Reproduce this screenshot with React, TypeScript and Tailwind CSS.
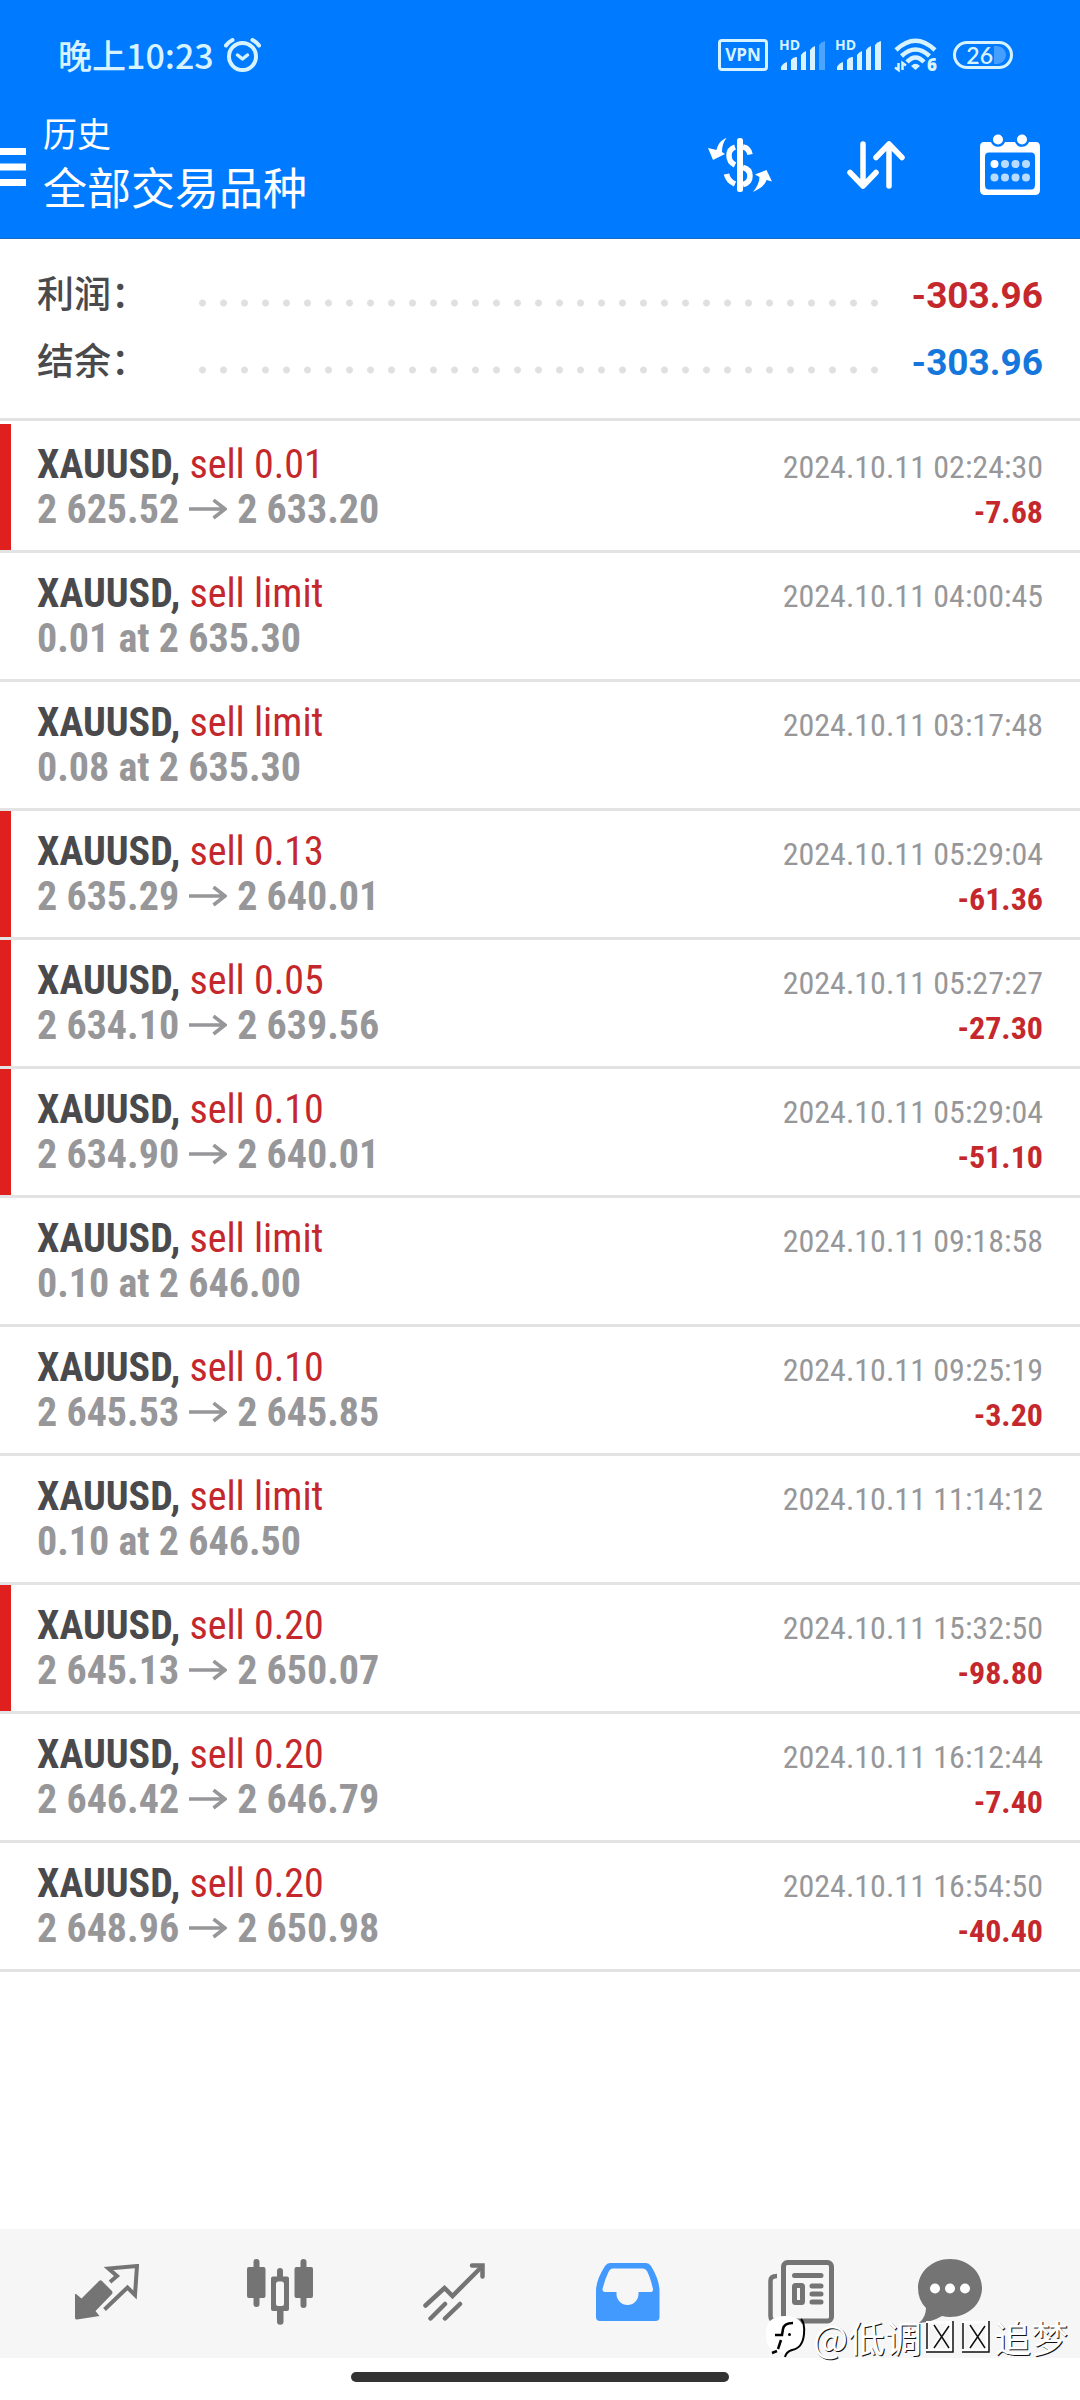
// src/App.tsx
import React from 'react';

type Deal = {
  type: string;
  detail: string;
  closePrice?: string;
  time: string;
  profit?: string;
  marked?: boolean;
};

const deals: Deal[] = [
  { type: 'sell 0.01', detail: '2 625.52', closePrice: '2 633.20', time: '2024.10.11 02:24:30', profit: '-7.68', marked: true },
  { type: 'sell limit', detail: '0.01 at 2 635.30', time: '2024.10.11 04:00:45' },
  { type: 'sell limit', detail: '0.08 at 2 635.30', time: '2024.10.11 03:17:48' },
  { type: 'sell 0.13', detail: '2 635.29', closePrice: '2 640.01', time: '2024.10.11 05:29:04', profit: '-61.36', marked: true },
  { type: 'sell 0.05', detail: '2 634.10', closePrice: '2 639.56', time: '2024.10.11 05:27:27', profit: '-27.30', marked: true },
  { type: 'sell 0.10', detail: '2 634.90', closePrice: '2 640.01', time: '2024.10.11 05:29:04', profit: '-51.10', marked: true },
  { type: 'sell limit', detail: '0.10 at 2 646.00', time: '2024.10.11 09:18:58' },
  { type: 'sell 0.10', detail: '2 645.53', closePrice: '2 645.85', time: '2024.10.11 09:25:19', profit: '-3.20' },
  { type: 'sell limit', detail: '0.10 at 2 646.50', time: '2024.10.11 11:14:12' },
  { type: 'sell 0.20', detail: '2 645.13', closePrice: '2 650.07', time: '2024.10.11 15:32:50', profit: '-98.80', marked: true },
  { type: 'sell 0.20', detail: '2 646.42', closePrice: '2 646.79', time: '2024.10.11 16:12:44', profit: '-7.40' },
  { type: 'sell 0.20', detail: '2 648.96', closePrice: '2 650.98', time: '2024.10.11 16:54:50', profit: '-40.40' },
];

/* ==================== Status bar icons ==================== */
const AlarmIcon = () => (
  <svg width="37" height="35" viewBox="0 0 37 35" fill="none" stroke="currentColor" strokeWidth="4" strokeLinecap="round" strokeLinejoin="round">
    <circle cx="18.5" cy="18.5" r="13.5" />
    <path d="M13.5 17L18.5 21L23.5 17" strokeWidth="3.5" />
    <path d="M2 7.5Q4.5 4 8.5 2M35 7.5Q32.5 4 28.5 2" />
  </svg>
);

const SignalIcon = ({ weak }: { weak?: boolean }) => (
  <svg width="47" height="42" viewBox="0 -5 47 42" fill="currentColor">
    <text x="0" y="11" fontSize="14" fontWeight="700" fontFamily="Open Sans, sans-serif">HD</text>
    <path d="M2 31V28Q4 24 8 23V31ZM12 31V21Q14 18 18 18V31ZM22 31V16Q24 13 27 12V31ZM31 31V11Q33 8 36 7V31Z" />
    <path d="M40 31V6Q42 3 46 2V31Z" opacity={weak ? 0.35 : 1} />
  </svg>
);

const WifiIcon = () => (
  <svg width="48" height="46" viewBox="0 -6 48 46" fill="none" stroke="currentColor" strokeWidth="4.5">
    <path d="M2 12Q21.500 -6.500 41 12" />
    <path d="M7.500 18Q21.500 5 35.500 18" />
    <path d="M13 24Q21.500 15 30 24" />
    <path d="M21.500 32L17 28Q21.500 23.500 26 28Z" fill="currentColor" stroke="none" />
    <path d="M4.500 25V32L1 29.500M8.500 32V25L12 27.500" strokeWidth="2.500" />
    <text x="33" y="33" fontSize="17" fontWeight="800" fill="currentColor" stroke="none" fontFamily="Open Sans, sans-serif">6</text>
  </svg>
);

/* ==================== Toolbar icons ==================== */
const MenuIcon = () => (
  <svg width="26" height="38" viewBox="0 0 26 38" fill="currentColor">
    <path d="M0 0H26V7H0ZM0 15.500H26V22.500H0ZM0 31H26V38H0Z" />
  </svg>
);

const CurrencyIcon = () => (
  <svg width="64" height="54" viewBox="0 0 64 54" fill="none">
    <rect x="29" y="0" width="6" height="54" rx="2.500" fill="currentColor" />
    <path d="M27 9Q21 11 21 17.500T27 27M35 9Q41 10 42 16.500M35 29.500Q42 31 42 38T35 46.500M18.500 36Q20 43 27 46" stroke="currentColor" strokeWidth="5.500" />
    <path d="M18.500 0C13 2 10 6 8.500 12L0 10L5 22L17 16L14 14C14 9 15 4 18.500 0Z" fill="currentColor" />
    <path d="M45 54C52 51 57 47 58.500 42L64 43.500L58.500 32L47 36.500L51.500 39C51.500 44 49 49 45 54Z" fill="currentColor" />
  </svg>
);

const SortIcon = () => (
  <svg width="58" height="48" viewBox="0 0 58 48" fill="none" stroke="currentColor" strokeWidth="5.500" strokeLinecap="round" strokeLinejoin="round">
    <path d="M16 3V45M3 31.500L16 45L29 31.500" />
    <path d="M42 45V3M29 16.500L42 3L55 16.500" />
  </svg>
);

const CalendarIcon = () => (
  <svg width="60" height="62" viewBox="0 0 60 62" fill="currentColor">
    <path fillRule="evenodd" d="M4 8H11A7.500 7.500 0 0 0 25 8H35A7.500 7.500 0 0 0 49 8H56Q60 8 60 13V56Q60 61 55 61H5Q0 61 0 56V13Q0 8 4 8ZM9 18.500Q5 18.500 5 22.500V51Q5 55.500 9 55.500H51Q55 55.500 55 51V22.500Q55 18.500 51 18.500Z" />
    <circle cx="18" cy="5.500" r="5" />
    <circle cx="42" cy="5.500" r="5" />
    <circle cx="14.500" cy="30" r="4" />
    <g fill="#b8dcff">
      <circle cx="25" cy="30" r="4" />
      <circle cx="35.500" cy="30" r="4" />
      <circle cx="46" cy="30" r="4" />
      <circle cx="14.500" cy="43.500" r="4" />
      <circle cx="25" cy="43.500" r="4" />
      <circle cx="35.500" cy="43.500" r="4" />
      <circle cx="46" cy="43.500" r="4" />
    </g>
  </svg>
);

/* ==================== Tab bar icons ==================== */
const QuotesIcon = () => (
  <svg width="64" height="56" viewBox="0 0 64 56" fill="none">
    <path d="M1 30L6.500 34.500L24 17Q25.500 15.500 27 17L37 27Q38 28.500 37 30L20.500 47L24.500 52L2 55.500Q0 55.500 0 54V30Z" fill="currentColor" />
    <path d="M35 18L42 12L33.500 4.500L62 2L60 31L52.500 23.500L29.500 45.500" stroke="currentColor" strokeWidth="4" />
  </svg>
);

const ChartIcon = () => (
  <svg width="66" height="66" viewBox="0 0 66 66" fill="currentColor">
    <rect x="6.500" y="0" width="6" height="48" rx="3" />
    <rect x="0" y="8" width="18.500" height="31" rx="2" />
    <rect x="53.500" y="0" width="6" height="49" rx="3" />
    <rect x="47.500" y="8" width="18.500" height="31" rx="2" />
    <path fillRule="evenodd" d="M30 17.500V12A3 3 0 0 1 36 12V17.500H40Q42 17.500 42 19.500V50Q42 52 40 52H36.500V62.500A3 3 0 0 1 30 62.500V52H26Q24 52 24 50V19.500Q24 17.500 26 17.500ZM31 22.500Q29 22.500 29 25V45Q29 47 31 47H35Q37 47 37 45V25Q37 22.500 35 22.500Z" />
  </svg>
);

const TradeIcon = () => (
  <svg width="62" height="58" viewBox="0 0 62 58" fill="none" stroke="currentColor" strokeWidth="4.500" strokeLinecap="round">
    <path d="M2.500 42.500L21.500 25L29.500 33L58 4.500" />
    <path d="M49 2.500H59.500V13.500" />
    <path d="M55 3H60V9Z" fill="currentColor" stroke="none" />
    <path d="M7.500 55.500L22 41M22 55.500L37 41" />
  </svg>
);

const HistoryIcon = () => (
  <svg width="64" height="58" viewBox="0 0 64 58" fill="currentColor">
    <path fillRule="evenodd" d="M14 0H50Q53 0 55 3Q63.500 17 63.500 28V54Q63.500 58 59.500 58H4Q0 58 0 54V28Q0 17 9 3Q11 0 14 0ZM17 5.500Q14 5.500 12.500 9Q9 16 6.500 26Q6.500 29 9 29H20.500V31A11 11 0 0 0 42.500 31V29H54Q57.500 29 57 26Q54.500 15 51 8Q49.500 5.500 47 5.500Z" />
  </svg>
);

const NewsIcon = () => (
  <svg width="66" height="64" viewBox="0 0 66 64" fill="none" stroke="currentColor" strokeWidth="5" strokeLinecap="round">
    <rect x="15.500" y="2.500" width="48" height="58.500" rx="4" />
    <path d="M26.500 15.500H53M44 26H53M44 34H53M44 42H53" />
    <rect x="26.500" y="25.500" width="8" height="17" rx="1" strokeLinejoin="round" />
    <path d="M9 16Q2.500 16 2.500 21V56Q2.500 61 8 61H15" strokeWidth="4.500" strokeLinecap="butt" />
  </svg>
);

const ChatIcon = () => (
  <svg width="64" height="66" viewBox="0 0 64 66">
    <path d="M32 0C50 0 64 13 64 29S50 58 32 58Q28 58 24 57Q14 63 1 64Q8 58 8 49Q0 41 0 29C0 13 14 0 32 0Z" fill="currentColor" />
    <g fill="#fff">
      <circle cx="17" cy="29.500" r="5" />
      <circle cx="32" cy="29.500" r="5" />
      <circle cx="47" cy="29.500" r="5" />
    </g>
  </svg>
);

const PriceArrow = () => (
  <svg className="mx-2.5 inline-block align-baseline" width="38" height="24" viewBox="0 0 38 24" fill="none" stroke="currentColor" strokeWidth="3.500" aria-label="to">
    <path d="M0 10H36M24.500 1L36 10L24.500 19" />
  </svg>
);

const CrossBox = () => (
  <svg className="mx-1" width="28" height="32" viewBox="0 0 28 32" fill="none">
    <path d="M1 31V1H25V29H1M7 4L22 26M22 4L7 26" stroke="#fff" strokeWidth="3" />
    <path d="M27 0V31H0M1 28V2" stroke="#111" strokeWidth="1.500" />
    <path d="M8 4L23 27M23 5L8 27" stroke="#111" strokeWidth="1.500" />
  </svg>
);

const tabs = [
  { label: 'Quotes', icon: <QuotesIcon />, style: 'flex-[174] text-[#747474]' },
  { label: 'Chart', icon: <ChartIcon />, style: 'flex-[174] text-[#747474]' },
  { label: 'Trade', icon: <TradeIcon />, style: 'flex-[174] text-[#747474]' },
  { label: 'History', icon: <HistoryIcon />, style: 'flex-[174] text-[#429aff]' },
  { label: 'News', icon: <NewsIcon />, style: 'flex-[174] text-[#747474]' },
  { label: 'Messages', icon: <ChatIcon />, style: 'flex-[124] text-[#747474]' },
];

const SummaryRow = ({ label, value, color }: { label: string; value: string; color: string }) => (
  <div className="flex h-[67px] items-center">
    <dt className="w-[155px] text-[37px] font-medium text-[#4a4a4d]">{label}</dt>
    <div className="flex-1 pt-3.5">
      <div className="h-2 bg-[radial-gradient(circle,#e0e0e0_3px,transparent_4px)] bg-[length:21px_8px] bg-repeat-x" />
    </div>
    <dd className={`ml-7 text-[37px] font-bold ${color}`}>{value}</dd>
  </div>
);

export default function App() {
  return (
    <div className="relative flex min-h-screen flex-col overflow-hidden bg-white font-[Roboto,'Noto_Sans_CJK_SC',sans-serif]">
      <header className="border-b border-[#1a6cc4] bg-[#007aff] text-white">
        {/* Status bar */}
        <div className="flex h-[110px] items-center justify-between pr-[67px] pl-[58px] text-[#d6f3ff]">
          <div className="flex items-center gap-2.5 font-['Noto_Sans_CJK_SC',sans-serif] text-[34px] leading-10 font-medium">
            <span>晚上10:23</span>
            <AlarmIcon />
          </div>
          <div className="flex items-center font-['Open_Sans',sans-serif]">
            <span className="mr-[11px] flex h-8 w-[50px] items-center justify-center rounded border-3 border-current text-[17px] font-bold">VPN</span>
            <span className="mr-[9px]"><SignalIcon weak /></span>
            <span className="mr-3"><SignalIcon /></span>
            <WifiIcon />
            <span className="ml-[11px] flex h-7 w-[60px] items-center justify-end gap-px rounded-full border-3 border-current pr-[4px] font-[Lato,sans-serif] text-[23px] font-semibold">
              26
              <span className="h-[18px] w-3 rounded-r-full bg-[#459fff]" />
            </span>
          </div>
        </div>

        {/* Title and actions */}
        <div className="flex items-center pb-[18px]">
          <button type="button" aria-label="Menu" className="pt-1"><MenuIcon /></button>
          <div className="ml-[17px] flex-1">
            <p className="text-[34px] leading-[50px]">历史</p>
            <h1 className="text-[44px] leading-[60px]">全部交易品种</h1>
          </div>
          <div className="flex items-center gap-[75px] pr-10">
            <button type="button" aria-label="Currency"><CurrencyIcon /></button>
            <button type="button" aria-label="Sort"><SortIcon /></button>
            <button type="button" aria-label="Calendar"><CalendarIcon /></button>
          </div>
        </div>
      </header>

      <main className="flex-1">
        {/* Totals */}
        <dl className="border-b-3 border-[#e3e3e3] px-[37px] pt-[23px] pb-[22px]">
          <SummaryRow label="利润：" value="-303.96" color="text-[#c5282c]" />
          <SummaryRow label="结余：" value="-303.96" color="text-[#1577dc]" />
        </dl>

        {/* Deals */}
        <ul className="pt-[3px] font-['Roboto_Condensed','Liberation_Sans_Narrow',sans-serif]">
          {deals.map((deal, index) => (
            <li key={index} className="flex border-b-3 border-[#e3e3e3]">
              <div className={`w-[11px] ${deal.marked ? 'bg-[#e01f1f]' : ''}`} />
              <div className="flex-1 py-[18px] pr-[37px] pl-[26px] text-[40px] leading-[45px]">
                <div className="flex h-[45px] items-baseline justify-between">
                  <p className="text-[#c5282c]">
                    <span className="font-bold text-[#4a4a4d]">XAUUSD,</span> {deal.type}
                  </p>
                  <time className="text-[32px] leading-[45px] text-[#97979a]">{deal.time}</time>
                </div>
                <div className="flex h-[45px] items-baseline justify-between font-bold">
                  <p className="text-[#97979a]">
                    {deal.detail}
                    {deal.closePrice && <><PriceArrow />{deal.closePrice}</>}
                  </p>
                  {deal.profit && <p className="text-[32px] leading-[45px] text-[#c5282c]">{deal.profit}</p>}
                </div>
              </div>
            </li>
          ))}
        </ul>
      </main>

      {/* Tab bar */}
      <nav className="flex h-[129px] items-center bg-[#f6f6f6] pr-[68px] pb-1 pl-5">
        {tabs.map((tab) => (
          <button key={tab.label} type="button" aria-label={tab.label} className={`flex justify-center ${tab.style}`}>
            {tab.icon}
          </button>
        ))}
      </nav>
      <div className="flex justify-center pt-[14px] pb-[18px]">
        <div className="h-[10px] w-[35%] rounded-full bg-[#333]" />
      </div>

      {/* Author mark */}
      <div className="absolute right-3 bottom-9 flex items-center font-['Noto_Sans_CJK_SC',sans-serif] text-[37px] leading-[54px] text-white [text-shadow:1px_1px_0_#111]">
        <svg className="mr-1.5" width="42" height="44" viewBox="0 0 42 44">
          <path d="M20 1C33 1 38 6 38 17C38 29 34 33 27 35Q22 37 20 41Q18 37 16 37C5 36 1 31 1 19C1 7 7 1 20 1Z" fill="#fff" />
          <path d="M36 4Q40 8 39 19C38 30 33 34 27 35Q21 37 20 42" fill="none" stroke="#000" strokeWidth="2" />
          <path d="M28 8Q19 8 18 14L17 20H10M16 25L13 34M12 36L7 38" fill="none" stroke="#000" strokeWidth="2.500" />
          <circle cx="24.500" cy="19.500" r="1.500" />
        </svg>
        <span>@低调</span>
        <CrossBox />
        <CrossBox />
        <span>追梦</span>
      </div>
    </div>
  );
}
